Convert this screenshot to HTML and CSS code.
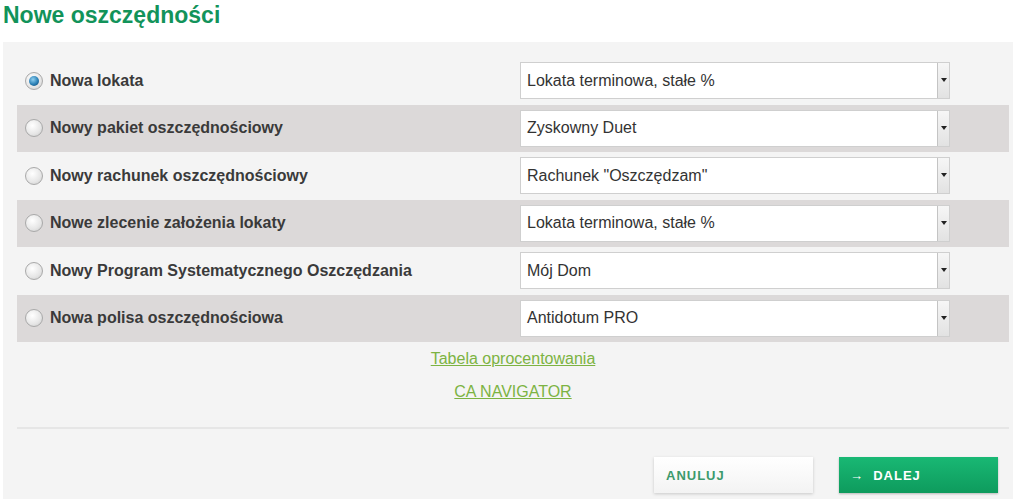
FILE: index.html
```html
<!DOCTYPE html>
<html lang="pl">
<head>
    <meta charset="UTF-8">
    <meta name="viewport" content="width=device-width, initial-scale=1.0">
    <title>Nowe oszczędności</title>
    <link rel="stylesheet" href="styles.css">
</head>
<body>
    <h1 class="title">Nowe oszczędności</h1>
    <div class="panel">
        <form id="formOszczednosci">
            <div class="row">
                <label class="opt"><span class="radio checked"></span>Nowa lokata</label>
                <div class="select"><span>Lokata terminowa, stałe %</span><i class="arrow"></i></div>
            </div>
            <div class="row alt">
                <label class="opt"><span class="radio"></span>Nowy pakiet oszczędnościowy</label>
                <div class="select"><span>Zyskowny Duet</span><i class="arrow"></i></div>
            </div>
            <div class="row">
                <label class="opt"><span class="radio"></span>Nowy rachunek oszczędnościowy</label>
                <div class="select"><span>Rachunek "Oszczędzam"</span><i class="arrow"></i></div>
            </div>
            <div class="row alt">
                <label class="opt"><span class="radio"></span>Nowe zlecenie założenia lokaty</label>
                <div class="select"><span>Lokata terminowa, stałe %</span><i class="arrow"></i></div>
            </div>
            <div class="row">
                <label class="opt"><span class="radio"></span>Nowy Program Systematycznego Oszczędzania</label>
                <div class="select"><span>Mój Dom</span><i class="arrow"></i></div>
            </div>
            <div class="row alt">
                <label class="opt"><span class="radio"></span>Nowa polisa oszczędnościowa</label>
                <div class="select"><span>Antidotum PRO</span><i class="arrow"></i></div>
            </div>
        </form>

        <div class="links">
            <a href="#">Tabela oprocentowania</a>
            <a href="#">CA NAVIGATOR</a>
        </div>

        <div class="actions">
            <button type="button" class="cancel-btn">ANULUJ</button>
            <button type="button" class="next-btn">&rarr;&nbsp; DALEJ</button>
        </div>
    </div>
</body>
</html>
```

FILE: styles.css
```css
body {
    margin: 0;
    font-family: "Liberation Sans", Arial, sans-serif;
    background-color: #fff;
    color: #333;
}
.title {
    margin: 0;
    padding: 0 0 0 3px;
    height: 42px;
    box-sizing: border-box;
    font-size: 23px;
    line-height: 30px;
    font-weight: bold;
    color: #12935a;
}
.panel {
    background-color: #f4f4f4;
    margin-left: 3px;
    width: 1010px;
    padding: 15px 4px 0 14px;
    box-sizing: border-box;
    height: 458px;
}
.row {
    display: flex;
    align-items: center;
    height: 47.5px;
    padding-left: 8px;
}
.row.alt {
    background-color: #dcd9d9;
}
.opt {
    display: flex;
    align-items: center;
    width: 495px;
    font-size: 16px;
    font-weight: bold;
    color: #3a3a3a;
}
.radio {
    width: 18px;
    height: 18px;
    border-radius: 50%;
    border: 1px solid #a9a9a9;
    background: radial-gradient(circle at 40% 35%, #fff 0%, #e6e6e6 60%, #c8c8c8 100%);
    margin-right: 7px;
    box-sizing: border-box;
    position: relative;
}
.radio.checked::after {
    content: "";
    position: absolute;
    left: 3px;
    top: 3px;
    width: 10px;
    height: 10px;
    border-radius: 50%;
    background: radial-gradient(circle at 40% 35%, #8fd0f0 0%, #2a7fb5 55%, #0b3f66 100%);
}
.select {
    display: flex;
    align-items: center;
    width: 430px;
    height: 37px;
    background-color: #fff;
    border: 1px solid #cfcfcf;
    box-sizing: border-box;
    font-size: 16px;
    color: #333;
}
.select span {
    flex: 1;
    padding-left: 6px;
}
.arrow {
    width: 11px;
    height: 35px;
    border-left: 1px solid #c4c4c4;
    background: linear-gradient(#f6f6f6, #e2e2e2);
    position: relative;
}
.arrow::after {
    content: "";
    position: absolute;
    left: 3px;
    top: 15px;
    border-left: 3px solid transparent;
    border-right: 3px solid transparent;
    border-top: 4px solid #222;
}
.links {
    display: flex;
    flex-direction: column;
    align-items: center;
    gap: 15px;
    padding-top: 8px;
    height: 77px;
    border-bottom: 2px solid #e6e6e6;
}
.links a {
    font-size: 16px;
    color: #7cb342;
    text-decoration: underline;
}
.actions {
    display: flex;
    justify-content: flex-end;
    gap: 26px;
    padding: 28px 11px 0 0;
}
button {
    width: 159px;
    height: 36px;
    border: none;
    font-family: "Liberation Sans", Arial, sans-serif;
    font-size: 13px;
    font-weight: bold;
    letter-spacing: 1px;
    text-align: left;
    padding-left: 12px;
    cursor: pointer;
}
.cancel-btn {
    background: linear-gradient(#fff, #f3f3f3);
    color: #3c9a6c;
    box-shadow: 0 1px 3px rgba(0, 0, 0, 0.18);
}
.next-btn {
    background: linear-gradient(#19b874, #0e9b5d);
    color: #fff;
    box-shadow: 0 1px 2px rgba(0, 0, 0, 0.25);
    padding-left: 11px;
}
```
